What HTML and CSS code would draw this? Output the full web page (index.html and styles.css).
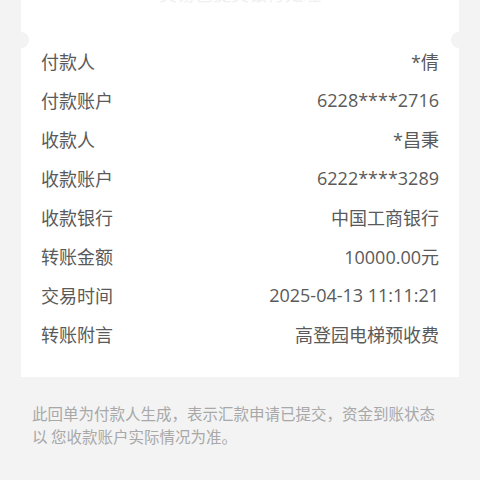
FILE: index.html
```html
<!DOCTYPE html>
<html lang="zh-CN">
<head>
<meta charset="utf-8">
<link rel="stylesheet" href="styles.css">
</head>
<body>
<div class="page">
  <div class="card">
    <div class="head">交易已提交银行处理</div>
    <div class="rows">
      <div class="row"><span class="label">付款人</span><span class="value">*倩</span></div>
      <div class="row"><span class="label">付款账户</span><span class="value">6228****2716</span></div>
      <div class="row"><span class="label">收款人</span><span class="value">*昌秉</span></div>
      <div class="row"><span class="label">收款账户</span><span class="value">6222****3289</span></div>
      <div class="row"><span class="label">收款银行</span><span class="value">中国工商银行</span></div>
      <div class="row"><span class="label">转账金额</span><span class="value">10000.00元</span></div>
      <div class="row"><span class="label">交易时间</span><span class="value">2025-04-13 11:11:21</span></div>
      <div class="row"><span class="label">转账附言</span><span class="value">高登园电梯预收费</span></div>
    </div>
  </div>
  <p class="note">此回单为付款人生成，表示汇款申请已提交，资金到账状态以 您收款账户实际情况为准。</p>
</div>
</body>
</html>
```
FILE: styles.css
```css
html, body {
  margin: 0;
  padding: 0;
  background: #f3f3f3;
  height: 480px;
  overflow: hidden;
}
.page {
  padding: 0 21px;
  font-family: "Noto Sans CJK SC", "Noto Sans", sans-serif;
}
.card {
  position: relative;
  background: #fff;
  margin-top: -17px;
  padding: 0 20px 24px;
}
.card::before,
.card::after {
  content: "";
  position: absolute;
  top: 49px;
  width: 16px;
  height: 16px;
  border-radius: 50%;
  background: #f3f3f3;
}
.card::before { left: -8px; }
.card::after { right: -8px; }
.head {
  height: 23px;
  line-height: 20px;
  font-size: 18px;
  color: #f0f0f0;
  text-align: center;
  margin-bottom: 35px;
}
.rows {
  display: flex;
  flex-direction: column;
}
.row {
  display: flex;
  justify-content: space-between;
  align-items: center;
  height: 39px;
  font-size: 18px;
  color: #5a5a5a;
}
.value {
  font-family: "Open Sans", "Noto Sans CJK SC", sans-serif;
}
.note {
  margin: 25px 0 0;
  padding: 0 11px;
  font-size: 15.5px;
  line-height: 23px;
  color: #a8a8a8;
}
```
